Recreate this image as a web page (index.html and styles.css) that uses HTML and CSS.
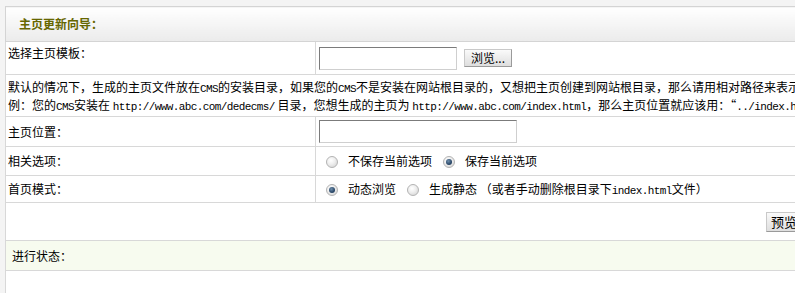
FILE: index.html
```html
<!DOCTYPE html>
<html lang="zh-CN">
<head>
<meta charset="utf-8">
<title>主页更新向导</title>
<link rel="stylesheet" href="styles.css">
</head>
<body>
<div class="page">
  <table class="form">
    <colgroup><col class="col-label"><col class="col-value"></colgroup>
    <tr class="row-head"><td colspan="2">主页更新向导：</td></tr>
    <tr class="row-1">
      <td class="lbl">选择主页模板：</td>
      <td class="val"><input class="txt txt-short" type="text"><button class="btn" type="button">浏览...</button></td>
    </tr>
    <tr class="row-note">
      <td colspan="2">默认的情况下，生成的主页文件放在<span class="en">CMS</span>的安装目录，如果您的<span class="en">CMS</span>不是安装在网站根目录的，又想把主页创建到网站根目录，那么请用相对路径来表示主页位置。<br>例：您的<span class="en">CMS</span>安装在 <span class="mono">http://www.abc.com/dedecms/</span> 目录，您想生成的主页为 <span class="mono">http://www.abc.com/index.html</span>，那么主页位置就应该用：“<span class="mono">../index.html</span>”。</td>
    </tr>
    <tr class="row-3">
      <td class="lbl">主页位置：</td>
      <td class="val"><input class="txt txt-long" type="text"></td>
    </tr>
    <tr class="row-4">
      <td class="lbl">相关选项：</td>
      <td class="val"><label class="opt"><span class="radio"></span>不保存当前选项</label><label class="opt"><span class="radio on"></span>保存当前选项</label></td>
    </tr>
    <tr class="row-5">
      <td class="lbl">首页模式：</td>
      <td class="val"><label class="opt"><span class="radio on"></span>动态浏览</label><label class="opt"><span class="radio"></span>生成静态 （或者手动删除根目录下<span class="mono">index.html</span>文件）</label></td>
    </tr>
    <tr class="row-6">
      <td colspan="2" class="actions"><button class="btn btn-preview" type="button">预览主页</button></td>
    </tr>
    <tr class="row-status"><td colspan="2">进行状态：</td></tr>
    <tr class="row-8"><td colspan="2"></td></tr>
  </table>
</div>
</body>
</html>
```
FILE: styles.css
```css
html, body {
  margin: 0;
  padding: 0;
  background: #f4f4f4;
  overflow: hidden;
}
body {
  font-family: "Noto Sans CJK SC", "Liberation Sans", sans-serif;
  font-size: 12px;
  color: #000;
}
.page {
  padding: 6px 0 0 5px;
}
.form {
  width: 1100px;
  border-collapse: collapse;
  background: #fff;
  table-layout: fixed;
}
.col-label { width: 310px; }
.form td {
  border: 1px solid #d8d8d8;
  padding: 0 2px;
  vertical-align: middle;
  white-space: nowrap;
  overflow: hidden;
  line-height: 16px;
}
.form .row-head td {
  height: 34px;
  padding-left: 13px;
  font-weight: bold;
  color: #666600;
  background: linear-gradient(#ffffff, #ebebeb);
  border-color: #d4d4d4;
}
.form .row-1 td { height: 29px; }
.form .row-1 .lbl { vertical-align: top; padding-top: 3px; }
.form .row-note td {
  height: 38px;
  padding: 3px 2px 0;
  line-height: 18px;
  vertical-align: top;
}
.form .row-3 td { height: 29px; }
.form .row-4 td { height: 28px; }
.form .row-5 td { height: 26px; }
.form .row-6 td { height: 37px; }
.form .row-status td {
  height: 29px;
  background: #f7fbef;
  padding-left: 6px;
}
.form .row-8 td { height: 30px; }
.form .val { padding-left: 3px; }
.txt {
  box-sizing: border-box;
  height: 23px;
  margin: 0;
  border: 1px solid;
  border-color: #7b7b7b #cfcfcf #cfcfcf #7b7b7b;
  background: #fff;
  vertical-align: middle;
  outline: none;
}
.txt-short { width: 138px; }
.txt-long { width: 198px; }
.btn {
  box-sizing: border-box;
  height: 18px;
  margin: 0 0 0 7px;
  padding: 0 6px;
  font-family: "Noto Sans CJK SC", sans-serif;
  font-size: 12px;
  line-height: 14px;
  color: #000;
  border: 1px solid;
  border-color: #c9c9c9 #9a9a9a #9a9a9a #c9c9c9;
  background: linear-gradient(#fafafa, #dedede);
  vertical-align: middle;
}
.form .actions { padding-left: 760px; }
.btn-preview {
  height: 20px;
  margin-left: 0;
  padding: 0 4px;
  font-size: 13px;
  line-height: 16px;
}
.en, .mono {
  font-family: "Liberation Mono", monospace;
  font-size: 11px;
  letter-spacing: -0.6px;
  line-height: 1;
}
.opt {
  margin-left: 7px;
  margin-right: 11px;
}
.opt + .opt { margin-left: 0; }
.radio {
  display: inline-block;
  box-sizing: border-box;
  width: 12px;
  height: 12px;
  border-radius: 50%;
  border: 1px solid #b4b4b4;
  background: radial-gradient(circle at 40% 35%, #ffffff 0%, #f0f0f0 40%, #cfcfcf 100%);
  margin-right: 10px;
  vertical-align: -2px;
  position: relative;
}
.radio.on::after {
  content: "";
  position: absolute;
  left: 2px;
  top: 2px;
  width: 6px;
  height: 6px;
  border-radius: 50%;
  background: radial-gradient(circle at 40% 35%, #6f8fae 0%, #2b4868 60%, #1b3350 100%);
}
```
